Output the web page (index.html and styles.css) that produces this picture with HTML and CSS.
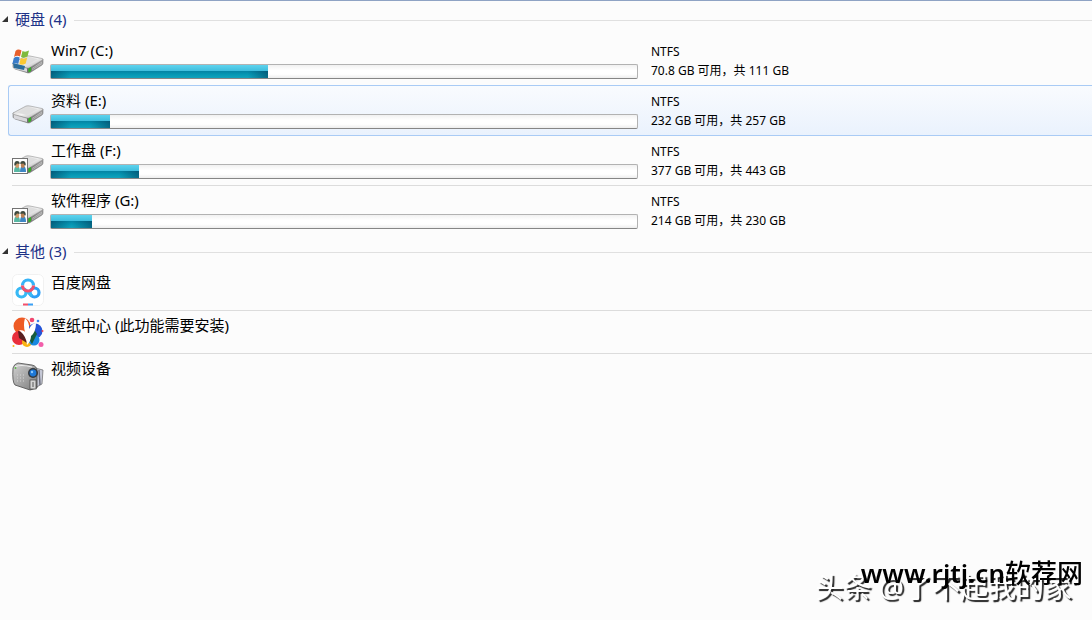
FILE: index.html
```html
<!DOCTYPE html>
<html lang="zh-CN">
<head>
    <meta charset="UTF-8">
    <meta name="viewport" content="width=device-width, initial-scale=1.0">
    <title>计算机</title>
    <link rel="stylesheet" href="styles.css">
</head>
<body>
    <svg class="defs" aria-hidden="true">
        <defs>
            <linearGradient id="metal" x1="0" y1="0" x2="1" y2="1">
                <stop offset="0" stop-color="#c2c2c2"/>
                <stop offset="0.5" stop-color="#f4f4f4"/>
                <stop offset="1" stop-color="#a0a0a0"/>
            </linearGradient>
            <linearGradient id="side" x1="0" y1="0" x2="1" y2="0">
                <stop offset="0" stop-color="#b5b5b5"/>
                <stop offset="0.5" stop-color="#6f6f6f"/>
                <stop offset="1" stop-color="#9b9b9b"/>
            </linearGradient>
            <linearGradient id="body" x1="0" y1="0" x2="1" y2="1">
                <stop offset="0" stop-color="#d2d2d2"/>
                <stop offset="1" stop-color="#7c7c7c"/>
            </linearGradient>
        </defs>
        <symbol id="drive" viewBox="0 0 32 32">
            <path d="M1 17 L1 21 Q1 22 3 23 L16 27 Q18 27 19 26 L30 19 Q31 18 31 17 L31 13 Z" fill="url(#side)" stroke="#7d7d7d" stroke-width="0.6"/>
            <path d="M1 17 L14 10 Q16 9.500 18 10 L30 12.500 Q31.500 13 30.500 14 L18 21.500 Q16.500 22.300 15 22 L2 18.500 Q0.500 18 1 17 Z" fill="url(#metal)" stroke="#969696" stroke-width="0.6"/>
            <path d="M5 16.500 L16 11 L26 13 L15 19 Z" fill="#dedede"/>
            <path d="M2 19 L15 22.600 L15 26 L2 22.500 Z" fill="#d9d9dd"/>
            <path d="M16.500 22.500 L19 21 L19 25 L16.500 26.500 Z" fill="#2eb61b"/>
            <path d="M20 24 L30 17.500 M20 22.500 L30 16" stroke="#d6d6d6" stroke-width="0.6"/>
        </symbol>
        <symbol id="users" viewBox="0 0 16 16">
            <rect x="0.500" y="0.500" width="15" height="15" fill="#fff" stroke="#737373"/>
            <path d="M2 14 Q2 8 5 8 Q8 8 8 14 Z" fill="#57b7a3"/>
            <path d="M8 14 Q8 8 11 8 Q14 8 14 14 Z" fill="#3d86c4"/>
            <ellipse cx="5.200" cy="7" rx="2" ry="3" fill="#d09a6a"/>
            <ellipse cx="10.800" cy="7" rx="2" ry="3" fill="#b98055"/>
            <path d="M2.300 7.500 Q2 3 5 3 Q8 3 7.500 6 L5 5.500 L3.500 7.500 Z M8.300 6 Q8 3 11 3 Q14 3 13.700 7.500 L12.500 7 L11.500 5.500 Z" fill="#3f4a3f"/>
        </symbol>
    </svg>

    <main>
        <section>
            <h2><span class="arrow"></span>硬盘 (4)</h2>
            <ul>
                <li class="drive">
                    <svg class="icon" viewBox="0 0 32 32">
                        <use href="#drive"/>
                        <path d="M1 17 L13 20 L12 24 L2 22 Z" fill="#2d6d9b"/>
                        <path d="M3.500 5 Q6 2.500 9.500 4.500 L8 10.500 Q5 9 2 11 Z" fill="#e8602c"/>
                        <path d="M10.500 5 Q13.500 6.500 17 4.500 L15.500 10.500 Q12 12.500 9 11 Z" fill="#7fba3c"/>
                        <path d="M1.800 12 Q4.500 10 7.700 11.500 L6.200 18 Q3.500 16.500 0.300 18 Z" fill="#3a7cc9"/>
                        <path d="M8.800 12 Q12 13.500 15.200 11.500 L13.700 17.500 Q10.500 19.500 7.300 18.300 Z" fill="#fbc832"/>
                    </svg>
                    <div class="info">
                        <span class="name">Win7 (C:)</span>
                        <div class="bar"><div class="used" style="width: 37%"></div></div>
                    </div>
                    <div class="detail"><span>NTFS</span><span>70.8 GB 可用，共 111 GB</span></div>
                </li>
                <li class="drive selected">
                    <svg class="icon" viewBox="0 0 32 32"><use href="#drive"/></svg>
                    <div class="info">
                        <span class="name">资料 (E:)</span>
                        <div class="bar"><div class="used" style="width: 10%"></div></div>
                    </div>
                    <div class="detail"><span>NTFS</span><span>232 GB 可用，共 257 GB</span></div>
                </li>
                <li class="drive">
                    <svg class="icon" viewBox="0 0 32 32">
                        <use href="#drive"/>
                        <use href="#users" y="12" width="16" height="16"/>
                    </svg>
                    <div class="info">
                        <span class="name">工作盘 (F:)</span>
                        <div class="bar"><div class="used" style="width: 15%"></div></div>
                    </div>
                    <div class="detail"><span>NTFS</span><span>377 GB 可用，共 443 GB</span></div>
                </li>
                <li class="drive">
                    <svg class="icon" viewBox="0 0 32 32">
                        <use href="#drive"/>
                        <use href="#users" y="12" width="16" height="16"/>
                    </svg>
                    <div class="info">
                        <span class="name">软件程序 (G:)</span>
                        <div class="bar"><div class="used" style="width: 7%"></div></div>
                    </div>
                    <div class="detail"><span>NTFS</span><span>214 GB 可用，共 230 GB</span></div>
                </li>
            </ul>
        </section>

        <section>
            <h2><span class="arrow"></span>其他 (3)</h2>
            <ul>
                <li class="other">
                    <svg class="icon" viewBox="0 0 32 32">
                        <rect x="0.500" y="0.500" width="31" height="31" rx="5" fill="#fff" stroke="#f1f1f1"/>
                        <g fill="none" stroke-width="3.200">
                            <circle cx="9.500" cy="18.500" r="4.500" stroke="#38b9f5"/>
                            <circle cx="22.500" cy="18.500" r="4.500" stroke="#2f9ff5"/>
                            <path d="M12 15 L16 18 L20 22" stroke="#38b9f5"/>
                            <path d="M10.500 11.500 A5.500 5.500 0 0 1 21.500 11.500" stroke="#35b3f7"/>
                            <path d="M10.500 11.500 A5.500 5.500 0 0 0 21.500 11.500" stroke="#f4516c"/>
                        </g>
                        <path d="M11 30.500 H16" stroke="#f4516c" stroke-width="2"/>
                        <path d="M16 30.500 H21" stroke="#3aa0f5" stroke-width="2"/>
                    </svg>
                    <span class="name">百度网盘</span>
                </li>
                <li class="other">
                    <svg class="icon" viewBox="0 0 32 32">
                        <circle cx="10" cy="9" r="8.500" fill="#ee5a24"/>
                        <circle cx="23" cy="14" r="7.500" fill="#2454d8"/>
                        <circle cx="7" cy="21" r="7" fill="#e92f3c"/>
                        <circle cx="15" cy="25" r="5" fill="#f9b414"/>
                        <circle cx="22" cy="23" r="5.500" fill="#1889e0"/>
                        <path d="M6 14 L14 16 L15 26 L7 21 Z" fill="#5a1f20"/>
                        <path d="M22 12 L25 17 L20 27 L17 22 Z" fill="#155c3d"/>
                        <path d="M13 1 Q18 6 17 12 Q20 6 24 6 Q24 15 19 19 Q19 24 15 28 Q15 20 7 13 Q12 13 13 15 Q11 8 13 1 Z" fill="#fff"/>
                        <circle cx="20" cy="3" r="2.300" fill="#f0466e"/>
                        <circle cx="26" cy="4" r="1.300" fill="#3b83ec"/>
                        <circle cx="29" cy="27.500" r="2.500" fill="#f25eaa"/>
                        <circle cx="30.500" cy="14" r="1" fill="#ef4a55"/>
                        <circle cx="1.500" cy="29" r="1" fill="#f9b414"/>
                    </svg>
                    <span class="name">壁纸中心 (此功能需要安装)</span>
                </li>
                <li class="other">
                    <svg class="icon" viewBox="0 0 32 32">
                        <path d="M23 8 L31 10 L30 24 L23 28 Z" fill="#c5c8d6" stroke="#666" stroke-width="0.7"/>
                        <path d="M27 10 L28 25" stroke="#6d6f7c" stroke-width="1.500"/>
                        <path d="M1 8 Q2 4 6 3 L20 5 Q25 6 25 11 L25 28 L18 30 L3 25 Q0 22 1 8 Z" fill="url(#body)" stroke="#4a4a4a" stroke-width="0.8"/>
                        <path d="M3 7 Q8 4 20 7" fill="none" stroke="#eee" stroke-width="1.200"/>
                        <path d="M5 15 H13 M5 18 H13 M5 21 H13" stroke="#d5d5d5" stroke-dasharray="1 2"/>
                        <circle cx="21" cy="13" r="5" fill="#34393f"/>
                        <circle cx="21" cy="13" r="3.400" fill="#1d78d8"/>
                        <circle cx="20" cy="12" r="1.200" fill="#8cc9ff"/>
                        <rect x="18" y="20" width="6" height="9" fill="#d5d5d5" stroke="#444" stroke-width="0.7"/>
                        <path d="M21 22 V27" stroke="#555"/>
                        <circle cx="3.500" cy="8" r="0.900" fill="#58b944"/>
                    </svg>
                    <span class="name">视频设备</span>
                </li>
            </ul>
        </section>
    </main>

    <div class="watermark">
        <span class="author">头条 @了不起我的家</span>
        <span class="site"><b>www.rjtj.cn</b>软荐网</span>
    </div>
</body>
</html>
```
FILE: styles.css
```css
* {
    box-sizing: border-box;
}
body {
    margin: 0;
    min-height: 100vh;
    border-top: 1px solid #8fa3c4;
    background-color: #fcfcfc;
    color: #000;
    font-family: "Noto Sans", "Noto Sans CJK SC", sans-serif;
}
.defs {
    position: absolute;
    width: 0;
    height: 0;
}
main {
    padding-top: 2px;
}
h2 {
    display: flex;
    align-items: center;
    height: 32px;
    margin: 0;
    padding: 0 0 2px 2px;
    color: #1e3287;
    font-size: 15px;
    font-weight: normal;
}
h2::after {
    content: "";
    flex: 1;
    height: 1px;
    margin: 4px 0 0 8px;
    background-color: #e0e0e0;
}
.arrow {
    width: 6px;
    height: 6px;
    margin: 2px 7px 0 0;
    background-color: #333;
    clip-path: polygon(100% 0, 100% 100%, 0 100%);
}
ul {
    margin: 0;
    padding: 0 0 0 8px;
    list-style: none;
}
li {
    position: relative;
    display: flex;
    padding-left: 4px;
}
li + li::before {
    content: "";
    position: absolute;
    top: 0;
    left: 4px;
    right: 0;
    height: 1px;
    background-color: #dcdcdc;
}
.icon {
    flex: none;
    width: 32px;
    height: 32px;
    margin-right: 6px;
}
.name {
    display: block;
    height: 20px;
    padding-left: 1px;
    font-size: 15px;
    line-height: 20px;
    white-space: nowrap;
}

/* hard disks */
.drive {
    height: 50px;
}
.drive .icon {
    margin-top: 11px;
}
.info {
    flex: 0 1 588px;
    padding-top: 5px;
}
.bar {
    height: 15px;
    margin-top: 4px;
    border: 1px solid #b2b2b2;
    border-bottom-color: #868686;
    border-radius: 2px;
    background: linear-gradient(#f1f1f1, #fff 40%, #fff 70%, #eee);
}
.used {
    height: 13px;
    background:
        linear-gradient(90deg, rgba(0, 50, 80, 0.5), transparent 20px, transparent calc(100% - 20px), rgba(0, 50, 80, 0.5)) 0 6px / 100% 7px no-repeat,
        linear-gradient(#5ed3ee, #3fbedd 45%, #0583a3 46%, #0699b5 75%, #12a2bc);
}
.detail {
    flex: none;
    padding: 7px 0 0 13px;
    font-size: 12px;
    line-height: 19px;
    white-space: nowrap;
}
.detail span {
    display: block;
}
.selected {
    height: 51px;
    margin-bottom: -1px;
    padding-left: 3px;
    border: 1px solid #a9cbf5;
    border-right: 0;
    border-radius: 3px 0 0 3px;
    background: linear-gradient(#f9fbfe, #eaf2fd);
}
.selected .icon {
    margin-top: 10px;
}
.selected .info {
    padding-top: 4px;
}
.selected .detail {
    padding-top: 6px;
}
.selected::before,
.selected + li::before {
    display: none;
}

/* other devices */
.other {
    height: 43px;
}
.other .icon {
    margin-top: 7px;
}
.other .name {
    margin-top: 5px;
}

.watermark {
    position: fixed;
    right: 9px;
    bottom: 13px;
    display: flex;
    flex-direction: column;
    align-items: flex-end;
    white-space: nowrap;
}
.author {
    padding-right: 11px;
    color: #fff;
    font-size: 28px;
    line-height: 40px;
    text-shadow: 2px 2px 1px #222;
}
.site {
    position: absolute;
    right: 0;
    bottom: 16px;
    font-size: 26px;
    font-weight: 500;
    line-height: 36px;
}
.site b {
    font-weight: 600;
}
```
